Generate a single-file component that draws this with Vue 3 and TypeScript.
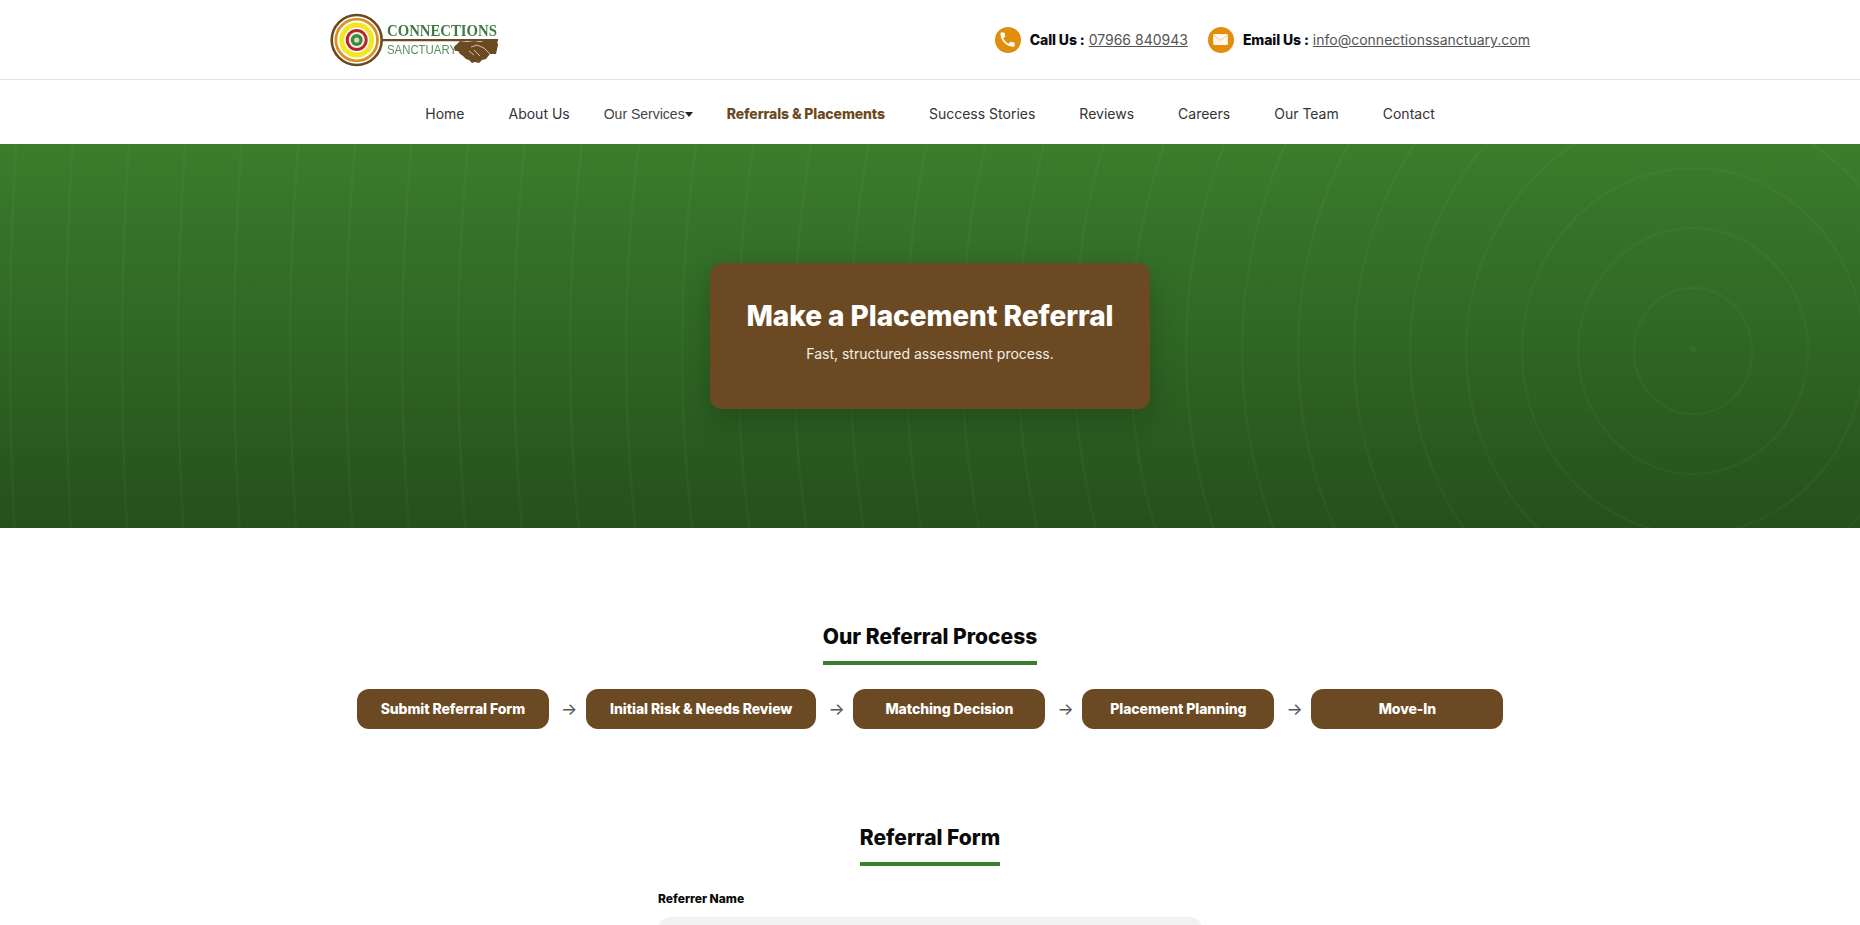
<template>
  <div class="page">
    <header class="topbar">
      <div class="topbar-inner">
        <svg class="logo" viewBox="0 0 170 60" width="170" height="60" aria-label="Connections Sanctuary">
          <circle cx="28.7" cy="30" r="25" fill="#fff" stroke="#6b4a23" stroke-width="2.6" />
          <circle cx="28.7" cy="30" r="20.8" fill="#fff" stroke="#d9921f" stroke-width="2.8" />
          <circle cx="28.7" cy="30" r="17.5" fill="#f3e62a" />
          <circle cx="28.7" cy="30" r="12.5" fill="#fff" />
          <circle cx="28.7" cy="30" r="11" fill="#b2262f" />
          <circle cx="28.7" cy="30" r="8" fill="#f5efe0" />
          <circle cx="28.7" cy="30" r="6" fill="#3d8a3f" />
          <circle cx="28.7" cy="30" r="2.6" fill="#cfe3c4" />
          <path d="M54 29h116v2.2H54z" fill="#6b4a23" />
          <text x="59" y="25.5" class="logo-top" textLength="110" lengthAdjust="spacingAndGlyphs">CONNECTIONS</text>
          <text x="59" y="44" class="logo-bottom" textLength="70" lengthAdjust="spacingAndGlyphs">SANCTUARY</text>
          <path d="M132 31l7 1 7-1 6 1 8-2 9 0 1 5-2 9-6 0-4 5-4 1-3 3-4-1-3 1-3-3-3-1-3-3-3-2-2-3-3 0-1-4z" fill="#6b4a23" />
          <path d="M143 37l6-2 7 3 6 6M141 41l5 4M146 40l6 6" fill="none" stroke="#e9dcc6" stroke-width=".8" />
        </svg>

        <div class="contacts">
          <div class="contact">
            <span class="contact-icon">
              <svg viewBox="0 0 24 24" width="19" height="19"><path fill="#fff" d="M6.6 10.8c1.4 2.8 3.8 5.1 6.6 6.6l2.2-2.2c.3-.3.7-.4 1-.2 1.1.4 2.3.6 3.6.6.6 0 1 .4 1 1V20c0 .6-.4 1-1 1C10.6 21 3 13.4 3 4c0-.6.4-1 1-1h3.5c.6 0 1 .4 1 1 0 1.3.2 2.5.6 3.6.1.3 0 .7-.2 1l-2.3 2.2z" /></svg>
            </span>
            <strong>Call Us :</strong>
            <a href="#">07966 840943</a>
          </div>
          <div class="contact">
            <span class="contact-icon">
              <svg viewBox="0 0 16 12" width="15" height="11">
                <rect width="16" height="12" rx="1.5" fill="#fff8ea" />
                <path d="M.5 1.5L8 7l7.5-5.5" fill="none" stroke="#e8b765" stroke-width=".8" />
              </svg>
            </span>
            <strong>Email Us :</strong>
            <a href="#">info@connectionssanctuary.com</a>
          </div>
        </div>
      </div>
    </header>

    <nav class="nav">
      <template v-for="item in navItems" :key="item.label">
        <button v-if="item.dropdown" class="nav-drop" type="button">
          {{ item.label }}<span class="caret"></span>
        </button>
        <a v-else href="#" class="nav-link" :class="{ active: item.active }">{{ item.label }}</a>
      </template>
    </nav>

    <section class="hero">
      <svg class="hero-rings" width="1860" height="384" aria-hidden="true">
        <circle cx="1693" cy="205" r="3" fill="#fff" fill-opacity="0.04" />
        <ellipse
          v-for="ring in rings"
          :key="ring.rx"
          cx="1693"
          cy="207"
          :rx="ring.rx"
          :ry="ring.ry"
          fill="none"
          stroke="#fff"
          stroke-opacity="0.03"
          stroke-width="2.6"
        />
      </svg>
      <div class="hero-card">
        <h1>Make a Placement Referral</h1>
        <p>Fast, structured assessment process.</p>
      </div>
    </section>

    <section class="process">
      <h2 class="section-title">Our Referral Process</h2>
      <div class="steps">
        <template v-for="(step, i) in steps" :key="step">
          <span v-if="i > 0" class="arrow">→</span>
          <div class="step">{{ step }}</div>
        </template>
      </div>
    </section>

    <section class="form-section">
      <h2 class="section-title">Referral Form</h2>
      <form class="form">
        <label for="referrer">Referrer Name</label>
        <input id="referrer" type="text" />
      </form>
    </section>
  </div>
</template>

<script setup lang="ts">
interface NavItem {
  label: string;
  active?: boolean;
  dropdown?: boolean;
}

const navItems: NavItem[] = [
  { label: 'Home' },
  { label: 'About Us' },
  { label: 'Our Services', dropdown: true },
  { label: 'Referrals & Placements', active: true },
  { label: 'Success Stories' },
  { label: 'Reviews' },
  { label: 'Careers' },
  { label: 'Our Team' },
  { label: 'Contact' },
];

const steps = [
  'Submit Referral Form',
  'Initial Risk & Needs Review',
  'Matching Decision',
  'Placement Planning',
  'Move-In',
];

// rings get flatter towards the left edge of the hero
const rings = Array.from({ length: 31 }, (_, i) => {
  const k = i + 1;
  const rx = 56 * k + 3;
  return { rx, ry: rx * (1.07 + Math.max(0, k - 10) * 0.019) };
});
</script>

<style>
html,
body {
  margin: 0;
  background: #fff;
  overflow: hidden;
}
</style>

<style scoped>
.page {
  height: 100vh;
  overflow: hidden;
  font-family: Inter, 'Liberation Sans', sans-serif;
  color: #0a0a0a;
}

.topbar {
  height: 79px;
  border-bottom: 1px solid #e2e2e2;
}

.topbar-inner {
  max-width: 1200px;
  height: 100%;
  margin: 0 auto;
  display: flex;
  align-items: center;
  justify-content: space-between;
}

.logo {
  margin-left: -2px;
  overflow: visible;
  filter: blur(0.3px);
}

.logo-top {
  font-family: 'Liberation Serif', serif;
  font-weight: 700;
  font-size: 17px;
  fill: #3f7a45;
}

.logo-bottom {
  font-family: 'Liberation Sans', sans-serif;
  font-size: 13px;
  fill: #5a8f5a;
}

.contacts {
  display: flex;
  align-items: center;
  gap: 20px;
}

.contact {
  display: flex;
  align-items: center;
  font-size: 14px;
  gap: 4px;
}

.contact strong {
  font-weight: 800;
  letter-spacing: -0.1px;
  color: #0b0b14;
}

.contact a {
  color: #555;
  text-decoration: underline;
}

.contact-icon {
  width: 26px;
  height: 26px;
  border-radius: 50%;
  background: #e08e0b;
  display: flex;
  align-items: center;
  justify-content: center;
  margin-right: 5px;
}

.nav {
  height: 62px;
  padding-top: 2px;
  display: flex;
  align-items: center;
  justify-content: center;
  font-size: 14px;
}

.nav-link {
  padding: 0 22px;
  color: #333;
  text-decoration: none;
}

.nav-link.active {
  font-weight: 800;
  letter-spacing: -0.1px;
  color: #6b4a23;
}

.nav-drop {
  display: flex;
  align-items: center;
  margin-top: 1px;
  padding: 0 12px;
  border: 0;
  background: none;
  font-family: 'Liberation Sans', sans-serif;
  font-size: 14px;
  color: #444;
}

.caret {
  width: 0;
  height: 0;
  margin-top: 2px;
  border-left: 4px solid transparent;
  border-right: 4px solid transparent;
  border-top: 5px solid #222;
}

.hero {
  position: relative;
  height: 384px;
  overflow: hidden;
  display: flex;
  align-items: center;
  justify-content: center;
  background: linear-gradient(180deg, #3a7d2c, #25501c);
}

.hero-rings {
  position: absolute;
  left: 0;
  top: 0;
  filter: blur(0.5px);
}

.hero-card {
  position: relative;
  width: 440px;
  box-sizing: border-box;
  padding: 32px 20px 45px;
  background: #6b4a23;
  border-radius: 12px;
  box-shadow: 0 10px 30px rgba(0, 0, 0, 0.2);
  text-align: center;
  color: #fff;
}

.hero-card h1 {
  margin: 0;
  font-size: 28px;
  line-height: 42px;
  font-weight: 800;
  letter-spacing: -0.05px;
}

.hero-card p {
  margin: 6px 0 0;
  font-size: 14px;
  line-height: 21px;
  color: #f3eee6;
}

.process {
  padding-top: 92px;
  display: flex;
  flex-direction: column;
  align-items: center;
}

.section-title {
  margin: 0;
  padding-bottom: 8px;
  border-bottom: 4px solid #3a7d2c;
  font-size: 21px;
  line-height: 33px;
  font-weight: 800;
}

.steps {
  margin-top: 24px;
  display: flex;
  align-items: center;
  gap: 12px;
}

.step {
  min-width: 192px;
  box-sizing: border-box;
  padding: 10px 24px;
  background: #6b4a23;
  border-radius: 12px;
  color: #fff;
  font-size: 14px;
  line-height: 20px;
  font-weight: 800;
  letter-spacing: -0.08px;
  text-align: center;
}

.arrow {
  width: 13px;
  font-size: 17px;
  line-height: 20px;
  color: #555;
  text-align: center;
}

.form-section {
  padding-top: 92px;
  display: flex;
  flex-direction: column;
  align-items: center;
}

.form {
  width: 544px;
  margin-top: 24px;
}

.form label {
  display: block;
  margin-bottom: 9px;
  font-size: 12px;
  line-height: 18px;
  font-weight: 800;
}

.form input {
  display: block;
  width: 100%;
  height: 46px;
  box-sizing: border-box;
  border: 0;
  border-radius: 12px;
  background: #f2f2f2;
}
</style>
